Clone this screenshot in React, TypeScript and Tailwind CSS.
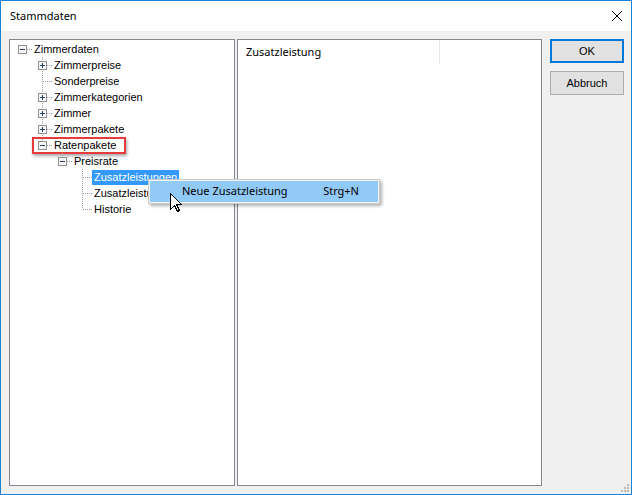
import React from "react";

type TreeRow = {
  label: string;
  level: number;
  box?: "plus" | "minus";
  last: boolean;
  root?: boolean;
  selected?: boolean;
  marked?: boolean;
};

const rows: TreeRow[] = [
  { label: "Zimmerdaten", level: 0, box: "minus", last: true, root: true },
  { label: "Zimmerpreise", level: 1, box: "plus", last: false },
  { label: "Sonderpreise", level: 1, last: false },
  { label: "Zimmerkategorien", level: 1, box: "plus", last: false },
  { label: "Zimmer", level: 1, box: "plus", last: false },
  { label: "Zimmerpakete", level: 1, box: "plus", last: false },
  { label: "Ratenpakete", level: 1, box: "minus", last: true, marked: true },
  { label: "Preisrate", level: 2, box: "minus", last: true },
  { label: "Zusatzleistungen", level: 3, last: false, selected: true },
  { label: "Zusatzleistungen", level: 3, last: false },
  { label: "Historie", level: 3, last: true },
];

const dot = "#a0a0a0";

function Connector({ row }: { row: TreeRow }) {
  return (
    <svg width="20" height="16" className="shrink-0" shapeRendering="crispEdges">
      {!row.root && (
        <line x1="10.5" y1="0" x2="10.5" y2="8" stroke={dot} strokeDasharray="1 1" />
      )}
      {!row.last && (
        <line x1="10.5" y1="8" x2="10.5" y2="16" stroke={dot} strokeDasharray="1 1" />
      )}
      <line x1={row.box ? 15 : 11} y1="8.5" x2="20" y2="8.5" stroke={dot} strokeDasharray="1 1" />
      {row.box && (
        <g>
          <rect x="6.5" y="4.5" width="8" height="8" fill="#f7f7f7" stroke="#919191" />
          <line x1="8" y1="8.5" x2="13" y2="8.5" stroke="#2c3e66" />
          {row.box === "plus" && (
            <line x1="10.5" y1="6" x2="10.5" y2="11" stroke="#2c3e66" />
          )}
        </g>
      )}
    </svg>
  );
}

function Tree() {
  return (
    <div className="flex flex-col pl-[2px] pt-[1px]">
      {rows.map((row, i) => (
        <div key={i} className="relative flex h-4 items-center">
          {Array.from({ length: row.level }).map((_, k) => (
            <div key={k} className="w-5 shrink-0" />
          ))}
          <Connector row={row} />
          <span
            className={
              "h-[15px] px-[2px] text-[11px] leading-[15px] whitespace-nowrap " +
              (row.selected ? "bg-[#3399ff] text-white" : "text-black")
            }
          >
            {row.label}
          </span>
          {row.marked && (
            <div className="absolute left-[20px] top-[0px] h-[17px] w-[94px] border-2 border-[#e8393c] shadow-[1px_2px_3px_rgba(0,0,0,0.35)]" />
          )}
        </div>
      ))}
    </div>
  );
}

function Cursor() {
  return (
    <svg width="13" height="20" viewBox="0 0 13 20" shapeRendering="crispEdges">
      <path
        d="M0.5 0.5 L0.5 16.5 L4.5 12.5 L7.5 18.5 L9.5 17.5 L6.5 11.5 L11.5 11.5 Z"
        fill="#fff"
        stroke="#000"
        strokeWidth="1"
        strokeLinejoin="miter"
      />
    </svg>
  );
}

export default function App() {
  const sans = "font-['Segoe_UI','Noto_Sans',sans-serif]";
  const classic = "font-['Liberation_Sans',Arial,sans-serif]";

  return (
    <div className="relative flex h-[495px] w-[632px] flex-col border border-[#1883d7] bg-[#f0f0f0]">
      <div className={"flex h-[30px] shrink-0 items-center justify-between bg-white pl-[9px] pr-[9px] text-[11px] text-black " + sans}>
        <span>Stammdaten</span>
        <svg width="10" height="10" viewBox="0 0 10 10">
          <path d="M0 0 L10 10 M10 0 L0 10" stroke="#000" strokeWidth="1" />
        </svg>
      </div>

      <div className="flex flex-1 gap-[2px] pl-[8px] pr-[7px] pt-[8px] pb-[8px]">
        <div className={"h-full w-[226px] shrink-0 border border-[#828790] bg-white " + classic}>
          <Tree />
        </div>

        <div className="h-full w-[305px] shrink-0 border border-[#828790] bg-white">
          <div className="flex h-[24px]">
            <div className={"flex w-[202px] items-center border-r border-[#e5e5e5] pl-[8px] text-[11px] text-black " + sans}>
              Zusatzleistung
            </div>
          </div>
        </div>

        <div className={"ml-[6px] flex flex-col gap-[8px] " + classic}>
          <button className="h-[24px] w-[74px] border-2 border-[#0078d7] bg-[#e1e1e1] text-[11px] text-black">
            OK
          </button>
          <button className="h-[24px] w-[74px] border border-[#adadad] bg-[#e1e1e1] text-[11px] text-black">
            Abbruch
          </button>
        </div>
      </div>

      <div className={"absolute left-[147px] top-[178px] w-[232px] border border-[#cccccc] bg-[#f2f2f2] p-[1px] shadow-[2px_2px_3px_rgba(0,0,0,0.3)] " + sans}>
        <div className="flex h-[21px] items-center border border-[#91c9f7] bg-[#91c9f7] text-[11px] text-black">
          <span className="pl-[31px]">Neue Zusatzleistung</span>
          <span className="ml-auto pr-[18px]">Strg+N</span>
        </div>
      </div>

      <div className="absolute left-[169px] top-[192px]">
        <Cursor />
      </div>

      <div className="absolute bottom-[2px] right-[2px] grid grid-cols-3 gap-[1px]">
        <span className="h-[2px] w-[2px]" />
        <span className="h-[2px] w-[2px]" />
        <span className="h-[2px] w-[2px] bg-[#bcbcbc]" />
        <span className="h-[2px] w-[2px]" />
        <span className="h-[2px] w-[2px] bg-[#bcbcbc]" />
        <span className="h-[2px] w-[2px] bg-[#bcbcbc]" />
        <span className="h-[2px] w-[2px] bg-[#bcbcbc]" />
        <span className="h-[2px] w-[2px] bg-[#bcbcbc]" />
        <span className="h-[2px] w-[2px] bg-[#bcbcbc]" />
      </div>
    </div>
  );
}
